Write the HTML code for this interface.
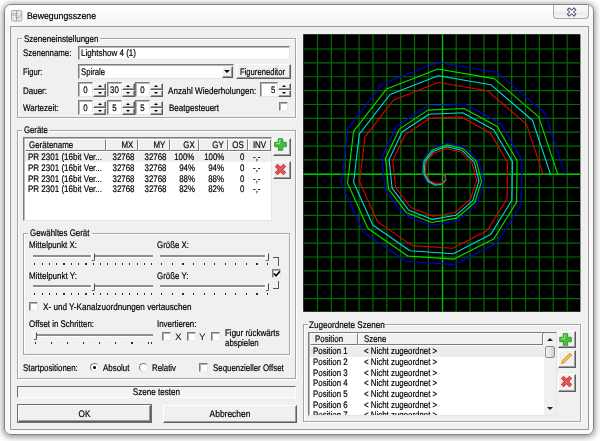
<!DOCTYPE html>
<html><head><meta charset="utf-8"><title>Bewegungsszene</title>
<style>
html,body{margin:0;padding:0;background:#fff;}
body{width:600px;height:441px;position:relative;overflow:hidden;font-family:"Liberation Sans",sans-serif;color:#000;}
div{position:absolute;box-sizing:border-box;}
.t{white-space:nowrap;transform-origin:0 0;color:#000;-webkit-text-stroke:.2px #000;text-rendering:geometricPrecision;}
.win{left:4px;top:4px;width:590px;height:431px;border:1px solid #858585;border-radius:7px;background:linear-gradient(#fdfdfd,#f4f4f4 24px,#fafafa 30px,#fbfbfb);box-shadow:0 1px 6px 1px rgba(0,0,0,.45);}
.client{left:10px;top:26px;width:579px;height:404px;background:#f0f0f0;border:1px solid #9a9a9a;}
.grp{border:1px solid #a6a6a6;box-shadow:1px 1px 0 #fff, inset 1px 1px 0 #fff;}
.lbl{background:#f0f0f0;}
.sunk{background:#fff;border:1px solid;border-color:#7b7b7b #e6e6e6 #e6e6e6 #7b7b7b;box-shadow:inset 1px 1px 0 #b9b9b9;}
.btn{background:#f0f0f0;border:1px solid;border-color:#fff #5e5e5e #5e5e5e #fff;box-shadow:inset -1px -1px 0 #9c9c9c;}
.cb{width:9px;height:9px;background:#fff;border:1px solid;border-color:#7b7b7b #e9e9e9 #e9e9e9 #7b7b7b;box-shadow:inset 1px 1px 0 #b0b0b0;}
.hdr{background:#f0f0f0;border:1px solid;border-color:#fff #7a7a7a #7a7a7a #fff;height:12px;}
.trk{height:3px;background:#8e8e8e;border-bottom:1px solid #fff;}
.thumb{width:4px;height:8.5px;background:#f0f0f0;border-left:1px solid #fff;border-top:1px solid #fff;border-right:1.3px solid #4a4a4a;border-bottom:1px solid #4a4a4a;border-radius:0 0 2px 2px;}
.tick{width:1.2px;height:2px;background:#2a2a2a;}
</style></head><body>

<div id="root" style="left:0;top:0;width:600px;height:441px;will-change:transform">
<div class="win"></div>
<svg style="position:absolute;left:11px;top:10px" width="12" height="12" viewBox="0 0 12 12"><rect x=".6" y=".6" width="10.2" height="10.4" rx="1.3" fill="#eef0f6" stroke="#9a9a9a" stroke-width=".9"/><path d="M1 3.3h9.6M1 5.8h9.6M1 8.3h9.6" stroke="#c9cde0" stroke-width=".6"/><line x1="5.7" y1="1" x2="5.7" y2="10.6" stroke="#8c8c94" stroke-width=".9"/><path d="M1.6 6 C2.6 2.5 3.6 2.5 4.6 5.5 S7.4 9.5 9.8 4.5" fill="none" stroke="#e58a8a" stroke-width="1"/></svg>
<div class="t" style="left:27px;top:10.7px;font-size:9.4px;line-height:9.4px;transform:scaleX(0.9322);">Bewegungsszene</div>
<div style="left:553px;top:5px;width:35.5px;height:14.3px;border:1px solid #a9a9a9;border-top:none;border-radius:0 0 4px 4px;background:linear-gradient(#fbfbfb,#f3f3f3 50%,#eaeaea 51%,#f4f4f4)"></div>
<svg style="position:absolute;left:566px;top:7px" width="12" height="10" viewBox="0 0 12 10"><path d="M1.9 1.5 L9.3 8.5 M9.3 1.5 L1.9 8.5" stroke="#50556f" stroke-width="3.7" stroke-linecap="butt"/><path d="M2.7 2.3 L8.5 7.7 M8.5 2.3 L2.7 7.7" stroke="#fafafd" stroke-width="1.7"/></svg>
<div class="client"></div>
<div class="grp" style="left:17px;top:38px;width:279px;height:80px"></div>
<div class="lbl" style="left:22px;top:33px;width:78px;height:11px"></div>
<div class="t" style="left:23.5px;top:35.2px;font-size:9.5px;line-height:9.5px;transform:scaleX(0.8445);">Szeneneinstellungen</div>
<div class="t" style="left:23.3px;top:49.2px;font-size:9.5px;line-height:9.5px;transform:scaleX(0.8256);">Szenenname:</div>
<div class="sunk" style="left:78px;top:46px;width:212px;height:14px"></div>
<div class="t" style="left:80.5px;top:49.2px;font-size:9.5px;line-height:9.5px;transform:scaleX(0.8468);">Lightshow 4 (1)</div>
<div class="t" style="left:23.3px;top:67.8px;font-size:9.5px;line-height:9.5px;transform:scaleX(0.8026);">Figur:</div>
<div class="sunk" style="left:78px;top:64px;width:156px;height:15px"></div>
<div class="t" style="left:80.5px;top:67.8px;font-size:9.5px;line-height:9.5px;transform:scaleX(0.8114);">Spirale</div>
<div class="btn" style="left:222.3px;top:65.5px;width:11px;height:12px"></div>
<div style="left:224.3px;top:70.3px;width:0;height:0;border-left:3.4px solid transparent;border-right:3.4px solid transparent;border-top:3.4px solid #000"></div>
<div class="btn" style="left:236px;top:63.8px;width:54.8px;height:15.4px"></div>
<div class="t" style="left:240px;top:67.8px;font-size:9.5px;line-height:9.5px;transform:scaleX(0.8038);">Figureneditor</div>
<div class="t" style="left:23.3px;top:86.5px;font-size:9.5px;line-height:9.5px;transform:scaleX(0.8416);">Dauer:</div>
<div class="sunk" style="left:78px;top:82.3px;width:15px;height:14.5px"></div>
<div class="t" style="left:78px;width:15px;top:84.89999999999999px;font-size:9.5px;line-height:9.5px;margin-top:.9px;text-align:center;transform:scaleX(0.83);transform-origin:50% 0">0</div>
<div class="btn" style="left:93.3px;top:82.6px;width:13px;height:7.2px"></div>
<div class="btn" style="left:93.3px;top:89.6px;width:13px;height:7.2px"></div>
<div style="left:97.8px;top:85.1px;width:0;height:0;border-left:2px solid transparent;border-right:2px solid transparent;border-bottom:2px solid #000"></div>
<div style="left:97.8px;top:92.3px;width:0;height:0;border-left:2px solid transparent;border-right:2px solid transparent;border-top:2px solid #000"></div>
<div class="sunk" style="left:106.5px;top:82.3px;width:15px;height:14.5px"></div>
<div class="t" style="left:106.5px;width:15px;top:84.89999999999999px;font-size:9.5px;line-height:9.5px;margin-top:.9px;text-align:center;transform:scaleX(0.83);transform-origin:50% 0">30</div>
<div class="btn" style="left:121.8px;top:82.6px;width:13px;height:7.2px"></div>
<div class="btn" style="left:121.8px;top:89.6px;width:13px;height:7.2px"></div>
<div style="left:126.30000000000001px;top:85.1px;width:0;height:0;border-left:2px solid transparent;border-right:2px solid transparent;border-bottom:2px solid #000"></div>
<div style="left:126.30000000000001px;top:92.3px;width:0;height:0;border-left:2px solid transparent;border-right:2px solid transparent;border-top:2px solid #000"></div>
<div class="sunk" style="left:134.5px;top:82.3px;width:15px;height:14.5px"></div>
<div class="t" style="left:134.5px;width:15px;top:84.89999999999999px;font-size:9.5px;line-height:9.5px;margin-top:.9px;text-align:center;transform:scaleX(0.83);transform-origin:50% 0">0</div>
<div class="btn" style="left:149.8px;top:82.6px;width:13px;height:7.2px"></div>
<div class="btn" style="left:149.8px;top:89.6px;width:13px;height:7.2px"></div>
<div style="left:154.3px;top:85.1px;width:0;height:0;border-left:2px solid transparent;border-right:2px solid transparent;border-bottom:2px solid #000"></div>
<div style="left:154.3px;top:92.3px;width:0;height:0;border-left:2px solid transparent;border-right:2px solid transparent;border-top:2px solid #000"></div>
<div class="t" style="left:23.3px;top:104.0px;font-size:9.5px;line-height:9.5px;transform:scaleX(0.8427);">Wartezeit:</div>
<div class="sunk" style="left:78px;top:100.4px;width:15px;height:14.5px"></div>
<div class="t" style="left:78px;width:15px;top:103.0px;font-size:9.5px;line-height:9.5px;margin-top:.9px;text-align:center;transform:scaleX(0.83);transform-origin:50% 0">0</div>
<div class="btn" style="left:93.3px;top:100.7px;width:13px;height:7.2px"></div>
<div class="btn" style="left:93.3px;top:107.7px;width:13px;height:7.2px"></div>
<div style="left:97.8px;top:103.2px;width:0;height:0;border-left:2px solid transparent;border-right:2px solid transparent;border-bottom:2px solid #000"></div>
<div style="left:97.8px;top:110.4px;width:0;height:0;border-left:2px solid transparent;border-right:2px solid transparent;border-top:2px solid #000"></div>
<div class="sunk" style="left:106.5px;top:100.4px;width:15px;height:14.5px"></div>
<div class="t" style="left:106.5px;width:15px;top:103.0px;font-size:9.5px;line-height:9.5px;margin-top:.9px;text-align:center;transform:scaleX(0.83);transform-origin:50% 0">5</div>
<div class="btn" style="left:121.8px;top:100.7px;width:13px;height:7.2px"></div>
<div class="btn" style="left:121.8px;top:107.7px;width:13px;height:7.2px"></div>
<div style="left:126.30000000000001px;top:103.2px;width:0;height:0;border-left:2px solid transparent;border-right:2px solid transparent;border-bottom:2px solid #000"></div>
<div style="left:126.30000000000001px;top:110.4px;width:0;height:0;border-left:2px solid transparent;border-right:2px solid transparent;border-top:2px solid #000"></div>
<div class="sunk" style="left:134.5px;top:100.4px;width:15px;height:14.5px"></div>
<div class="t" style="left:134.5px;width:15px;top:103.0px;font-size:9.5px;line-height:9.5px;margin-top:.9px;text-align:center;transform:scaleX(0.83);transform-origin:50% 0">5</div>
<div class="btn" style="left:149.8px;top:100.7px;width:13px;height:7.2px"></div>
<div class="btn" style="left:149.8px;top:107.7px;width:13px;height:7.2px"></div>
<div style="left:154.3px;top:103.2px;width:0;height:0;border-left:2px solid transparent;border-right:2px solid transparent;border-bottom:2px solid #000"></div>
<div style="left:154.3px;top:110.4px;width:0;height:0;border-left:2px solid transparent;border-right:2px solid transparent;border-top:2px solid #000"></div>
<div class="t" style="left:168px;top:86.5px;font-size:9.5px;line-height:9.5px;transform:scaleX(0.8525);">Anzahl Wiederholungen:</div>
<div class="sunk" style="left:259.5px;top:82.3px;width:18px;height:14.5px"></div>
<div class="t" style="right:324.5px;top:85.8px;font-size:9.5px;line-height:9.5px;transform:scaleX(0.83);transform-origin:100% 0">5</div>
<div class="btn" style="left:277.8px;top:82.6px;width:13px;height:7.2px"></div>
<div class="btn" style="left:277.8px;top:89.6px;width:13px;height:7.2px"></div>
<div style="left:282.3px;top:85.1px;width:0;height:0;border-left:2px solid transparent;border-right:2px solid transparent;border-bottom:2px solid #000"></div>
<div style="left:282.3px;top:92.3px;width:0;height:0;border-left:2px solid transparent;border-right:2px solid transparent;border-top:2px solid #000"></div>
<div class="t" style="left:168.5px;top:104.0px;font-size:9.5px;line-height:9.5px;transform:scaleX(0.8452);">Beatgesteuert</div>
<div class="cb" style="left:279px;top:102px"></div>
<div class="grp" style="left:17px;top:130px;width:279px;height:249px"></div>
<div class="lbl" style="left:22px;top:125px;width:27px;height:11px"></div>
<div class="t" style="left:23.7px;top:126.0px;font-size:9.5px;line-height:9.5px;transform:scaleX(0.8176);">Geräte</div>
<div class="sunk" style="left:23px;top:137px;width:249px;height:84px"></div>
<div class="hdr" style="left:24.5px;top:138.5px;width:81.0px"></div>
<div class="t" style="left:28.8px;top:141.4px;font-size:9.5px;line-height:9.5px;transform:scaleX(0.8379);">Gerätename</div>
<div class="hdr" style="left:105.5px;top:138.5px;width:32.0px"></div>
<div class="t" style="right:466.5px;top:141.4px;font-size:9.5px;line-height:9.5px;transform:scaleX(0.83);transform-origin:100% 0">MX</div>
<div class="hdr" style="left:137.5px;top:138.5px;width:32.0px"></div>
<div class="t" style="right:434.5px;top:141.4px;font-size:9.5px;line-height:9.5px;transform:scaleX(0.83);transform-origin:100% 0">MY</div>
<div class="hdr" style="left:169.5px;top:138.5px;width:29.0px"></div>
<div class="t" style="right:405.5px;top:141.4px;font-size:9.5px;line-height:9.5px;transform:scaleX(0.83);transform-origin:100% 0">GX</div>
<div class="hdr" style="left:198.5px;top:138.5px;width:29.0px"></div>
<div class="t" style="right:376.5px;top:141.4px;font-size:9.5px;line-height:9.5px;transform:scaleX(0.83);transform-origin:100% 0">GY</div>
<div class="hdr" style="left:227.5px;top:138.5px;width:20.0px"></div>
<div class="t" style="left:227.5px;width:20.0px;top:140.5px;font-size:9.5px;line-height:9.5px;margin-top:.9px;text-align:center;transform:scaleX(0.83);transform-origin:50% 0">OS</div>
<div class="hdr" style="left:247.5px;top:138.5px;width:23.0px"></div>
<div class="t" style="left:247.5px;width:23.0px;top:140.5px;font-size:9.5px;line-height:9.5px;margin-top:.9px;text-align:center;transform:scaleX(0.83);transform-origin:50% 0">INV</div>
<div style="left:24.5px;top:151.5px;width:246px;height:10.5px;background:#efefef"></div>
<div class="t" style="left:27.5px;top:153.2px;font-size:9.5px;line-height:9.5px;transform:scaleX(0.8441);">PR 2301 (16bit Ver...</div>
<div class="t" style="right:466px;top:153.2px;font-size:9.5px;line-height:9.5px;transform:scaleX(0.83);transform-origin:100% 0">32768</div>
<div class="t" style="right:434px;top:153.2px;font-size:9.5px;line-height:9.5px;transform:scaleX(0.83);transform-origin:100% 0">32768</div>
<div class="t" style="right:405.3px;top:153.2px;font-size:9.5px;line-height:9.5px;transform:scaleX(0.83);transform-origin:100% 0">100%</div>
<div class="t" style="right:376px;top:153.2px;font-size:9.5px;line-height:9.5px;transform:scaleX(0.83);transform-origin:100% 0">100%</div>
<div class="t" style="right:356px;top:153.2px;font-size:9.5px;line-height:9.5px;transform:scaleX(0.83);transform-origin:100% 0">0</div>
<div class="t" style="left:253px;top:153.2px;font-size:9.5px;line-height:9.5px;transform:scaleX(0.83);">-,-</div>
<div class="t" style="left:27.5px;top:163.9px;font-size:9.5px;line-height:9.5px;transform:scaleX(0.8441);">PR 2301 (16bit Ver...</div>
<div class="t" style="right:466px;top:163.9px;font-size:9.5px;line-height:9.5px;transform:scaleX(0.83);transform-origin:100% 0">32768</div>
<div class="t" style="right:434px;top:163.9px;font-size:9.5px;line-height:9.5px;transform:scaleX(0.83);transform-origin:100% 0">32768</div>
<div class="t" style="right:405.3px;top:163.9px;font-size:9.5px;line-height:9.5px;transform:scaleX(0.83);transform-origin:100% 0">94%</div>
<div class="t" style="right:376px;top:163.9px;font-size:9.5px;line-height:9.5px;transform:scaleX(0.83);transform-origin:100% 0">94%</div>
<div class="t" style="right:356px;top:163.9px;font-size:9.5px;line-height:9.5px;transform:scaleX(0.83);transform-origin:100% 0">0</div>
<div class="t" style="left:253px;top:163.9px;font-size:9.5px;line-height:9.5px;transform:scaleX(0.83);">-,-</div>
<div class="t" style="left:27.5px;top:174.6px;font-size:9.5px;line-height:9.5px;transform:scaleX(0.8441);">PR 2301 (16bit Ver...</div>
<div class="t" style="right:466px;top:174.6px;font-size:9.5px;line-height:9.5px;transform:scaleX(0.83);transform-origin:100% 0">32768</div>
<div class="t" style="right:434px;top:174.6px;font-size:9.5px;line-height:9.5px;transform:scaleX(0.83);transform-origin:100% 0">32768</div>
<div class="t" style="right:405.3px;top:174.6px;font-size:9.5px;line-height:9.5px;transform:scaleX(0.83);transform-origin:100% 0">88%</div>
<div class="t" style="right:376px;top:174.6px;font-size:9.5px;line-height:9.5px;transform:scaleX(0.83);transform-origin:100% 0">88%</div>
<div class="t" style="right:356px;top:174.6px;font-size:9.5px;line-height:9.5px;transform:scaleX(0.83);transform-origin:100% 0">0</div>
<div class="t" style="left:253px;top:174.6px;font-size:9.5px;line-height:9.5px;transform:scaleX(0.83);">-,-</div>
<div class="t" style="left:27.5px;top:185.3px;font-size:9.5px;line-height:9.5px;transform:scaleX(0.8441);">PR 2301 (16bit Ver...</div>
<div class="t" style="right:466px;top:185.3px;font-size:9.5px;line-height:9.5px;transform:scaleX(0.83);transform-origin:100% 0">32768</div>
<div class="t" style="right:434px;top:185.3px;font-size:9.5px;line-height:9.5px;transform:scaleX(0.83);transform-origin:100% 0">32768</div>
<div class="t" style="right:405.3px;top:185.3px;font-size:9.5px;line-height:9.5px;transform:scaleX(0.83);transform-origin:100% 0">82%</div>
<div class="t" style="right:376px;top:185.3px;font-size:9.5px;line-height:9.5px;transform:scaleX(0.83);transform-origin:100% 0">82%</div>
<div class="t" style="right:356px;top:185.3px;font-size:9.5px;line-height:9.5px;transform:scaleX(0.83);transform-origin:100% 0">0</div>
<div class="t" style="left:253px;top:185.3px;font-size:9.5px;line-height:9.5px;transform:scaleX(0.83);">-,-</div>
<div class="btn" style="left:272.5px;top:137.5px;width:18px;height:18px"></div>
<svg style="position:absolute;left:274.2px;top:138.4px" width="13" height="13" viewBox="0 0 13 13"><path d="M4.3 .7h4.4v3.6h3.6v4.4h-3.6v3.6h-4.4v-3.6h-3.6v-4.4h3.6z" fill="#45bd40" stroke="#2a9427" stroke-width=".9"/><path d="M5.6 2v3.6h-3.6 M5.6 2 h1.6" fill="none" stroke="#8be487" stroke-width="1.1"/></svg>
<div class="btn" style="left:272.5px;top:161px;width:18px;height:18px"></div>
<svg style="position:absolute;left:274.3px;top:162.8px" width="13" height="13" viewBox="0 0 13 13"><path d="M2.2 2.2 L10.8 10.8 M10.8 2.2 L2.2 10.8" stroke="#c53030" stroke-width="3.8" stroke-linecap="butt"/><path d="M2.4 2.4 L10.6 10.6 M10.6 2.4 L2.4 10.6" stroke="#e45555" stroke-width="2.4" stroke-linecap="butt"/></svg>
<div class="grp" style="left:23px;top:232.5px;width:267px;height:122px"></div>
<div class="lbl" style="left:28px;top:227px;width:64px;height:11px"></div>
<div class="t" style="left:30px;top:228.9px;font-size:9.5px;line-height:9.5px;transform:scaleX(0.8345);">Gewähltes Gerät</div>
<div class="t" style="left:29.3px;top:241.4px;font-size:9.5px;line-height:9.5px;transform:scaleX(0.8339);">Mittelpunkt X:</div>
<div class="trk" style="left:32.5px;top:255.0px;width:120.0px"></div>
<div class="thumb" style="left:91.3px;top:252.5px"></div>
<div class="tick" style="left:34.20px;top:262.5px"></div>
<div class="tick" style="left:41.51px;top:262.5px"></div>
<div class="tick" style="left:48.82px;top:262.5px"></div>
<div class="tick" style="left:56.13px;top:262.5px"></div>
<div class="tick" style="left:63.44px;top:262.5px"></div>
<div class="tick" style="left:70.75px;top:262.5px"></div>
<div class="tick" style="left:78.06px;top:262.5px"></div>
<div class="tick" style="left:85.37px;top:262.5px"></div>
<div class="tick" style="left:92.68px;top:262.5px"></div>
<div class="tick" style="left:99.99px;top:262.5px"></div>
<div class="tick" style="left:107.30px;top:262.5px"></div>
<div class="tick" style="left:114.61px;top:262.5px"></div>
<div class="tick" style="left:121.92px;top:262.5px"></div>
<div class="tick" style="left:129.23px;top:262.5px"></div>
<div class="tick" style="left:136.54px;top:262.5px"></div>
<div class="tick" style="left:143.85px;top:262.5px"></div>
<div class="tick" style="left:151.16px;top:262.5px"></div>
<div class="t" style="left:29.3px;top:272.4px;font-size:9.5px;line-height:9.5px;transform:scaleX(0.8442);">Mittelpunkt Y:</div>
<div class="trk" style="left:32.5px;top:285.0px;width:120.0px"></div>
<div class="thumb" style="left:91.3px;top:282.5px"></div>
<div class="tick" style="left:34.20px;top:292.5px"></div>
<div class="tick" style="left:41.51px;top:292.5px"></div>
<div class="tick" style="left:48.82px;top:292.5px"></div>
<div class="tick" style="left:56.13px;top:292.5px"></div>
<div class="tick" style="left:63.44px;top:292.5px"></div>
<div class="tick" style="left:70.75px;top:292.5px"></div>
<div class="tick" style="left:78.06px;top:292.5px"></div>
<div class="tick" style="left:85.37px;top:292.5px"></div>
<div class="tick" style="left:92.68px;top:292.5px"></div>
<div class="tick" style="left:99.99px;top:292.5px"></div>
<div class="tick" style="left:107.30px;top:292.5px"></div>
<div class="tick" style="left:114.61px;top:292.5px"></div>
<div class="tick" style="left:121.92px;top:292.5px"></div>
<div class="tick" style="left:129.23px;top:292.5px"></div>
<div class="tick" style="left:136.54px;top:292.5px"></div>
<div class="tick" style="left:143.85px;top:292.5px"></div>
<div class="tick" style="left:151.16px;top:292.5px"></div>
<div class="t" style="left:157px;top:241.4px;font-size:9.5px;line-height:9.5px;transform:scaleX(0.83);">Größe X:</div>
<div class="trk" style="left:160px;top:255.0px;width:106px"></div>
<div class="thumb" style="left:264.8px;top:252.5px"></div>
<div class="tick" style="left:161.20px;top:262.5px"></div>
<div class="tick" style="left:171.78px;top:262.5px"></div>
<div class="tick" style="left:182.36px;top:262.5px"></div>
<div class="tick" style="left:192.94px;top:262.5px"></div>
<div class="tick" style="left:203.52px;top:262.5px"></div>
<div class="tick" style="left:214.10px;top:262.5px"></div>
<div class="tick" style="left:224.68px;top:262.5px"></div>
<div class="tick" style="left:235.26px;top:262.5px"></div>
<div class="tick" style="left:245.84px;top:262.5px"></div>
<div class="tick" style="left:256.42px;top:262.5px"></div>
<div class="tick" style="left:267.00px;top:262.5px"></div>
<div class="t" style="left:157px;top:272.4px;font-size:9.5px;line-height:9.5px;transform:scaleX(0.83);">Größe Y:</div>
<div class="trk" style="left:160px;top:285.0px;width:106px"></div>
<div class="thumb" style="left:264.8px;top:282.5px"></div>
<div class="tick" style="left:161.20px;top:292.5px"></div>
<div class="tick" style="left:171.78px;top:292.5px"></div>
<div class="tick" style="left:182.36px;top:292.5px"></div>
<div class="tick" style="left:192.94px;top:292.5px"></div>
<div class="tick" style="left:203.52px;top:292.5px"></div>
<div class="tick" style="left:214.10px;top:292.5px"></div>
<div class="tick" style="left:224.68px;top:292.5px"></div>
<div class="tick" style="left:235.26px;top:292.5px"></div>
<div class="tick" style="left:245.84px;top:292.5px"></div>
<div class="tick" style="left:256.42px;top:292.5px"></div>
<div class="tick" style="left:267.00px;top:292.5px"></div>
<div style="left:272.5px;top:257px;width:6.5px;height:9px;border-top:1.5px solid #555;border-right:1.5px solid #555"></div>
<div style="left:272.5px;top:280.5px;width:6.5px;height:8px;border-bottom:1.5px solid #555;border-right:1.5px solid #555"></div>
<div class="cb" style="left:271.5px;top:268.5px"></div>
<svg style="position:absolute;left:272.5px;top:269.5px" width="8" height="8" viewBox="0 0 8 8"><path d="M1 3.5 L3 5.8 L7 1.2" fill="none" stroke="#000" stroke-width="1.6"/></svg>
<div class="cb" style="left:29px;top:302px"></div>
<div class="t" style="left:42.5px;top:302.9px;font-size:9.5px;line-height:9.5px;transform:scaleX(0.8571);">X- und Y-Kanalzuordnungen vertauschen</div>
<div class="t" style="left:29.3px;top:320.0px;font-size:9.5px;line-height:9.5px;transform:scaleX(0.8335);">Offset in Schritten:</div>
<div class="trk" style="left:35px;top:334.0px;width:117.5px"></div>
<div class="thumb" style="left:33.3px;top:331.5px"></div>
<div class="tick" style="left:34.50px;top:341.5px"></div>
<div class="tick" style="left:50.65px;top:341.5px"></div>
<div class="tick" style="left:66.80px;top:341.5px"></div>
<div class="tick" style="left:82.95px;top:341.5px"></div>
<div class="tick" style="left:99.10px;top:341.5px"></div>
<div class="tick" style="left:115.25px;top:341.5px"></div>
<div class="tick" style="left:131.40px;top:341.5px"></div>
<div class="tick" style="left:147.55px;top:341.5px"></div>
<div class="tick" style="left:151.20px;top:341.5px"></div>
<div class="t" style="left:157px;top:320.0px;font-size:9.5px;line-height:9.5px;transform:scaleX(0.83);">Invertieren:</div>
<div class="cb" style="left:162.3px;top:332px"></div>
<div class="t" style="left:174.7px;top:332.3px;font-size:9.4px;line-height:9.4px;transform:scaleX(1.05);-webkit-text-stroke:0">X</div>
<div class="cb" style="left:186.8px;top:332px"></div>
<div class="t" style="left:199.3px;top:332.3px;font-size:9.4px;line-height:9.4px;transform:scaleX(1.05);-webkit-text-stroke:0">Y</div>
<div class="cb" style="left:211px;top:332px"></div>
<div class="t" style="left:225px;top:328.7px;font-size:9.5px;line-height:9.5px;transform:scaleX(0.8393);">Figur rückwärts</div>
<div class="t" style="left:225px;top:338.7px;font-size:9.5px;line-height:9.5px;transform:scaleX(0.83);">abspielen</div>
<div class="t" style="left:23px;top:363.9px;font-size:9.5px;line-height:9.5px;transform:scaleX(0.83);">Startpositionen:</div>
<div style="left:90.0px;top:362.5px;width:9px;height:9px;border-radius:50%;background:#fff;border:1px solid;border-color:#7b7b7b #e2e2e2 #e2e2e2 #7b7b7b;"></div>
<div style="left:93.0px;top:365.5px;width:3px;height:3px;border-radius:50%;background:#000"></div>
<div class="t" style="left:103px;top:363.9px;font-size:9.5px;line-height:9.5px;transform:scaleX(0.8363);">Absolut</div>
<div style="left:138.5px;top:362.5px;width:9px;height:9px;border-radius:50%;background:#fff;border:1px solid;border-color:#7b7b7b #e2e2e2 #e2e2e2 #7b7b7b;"></div>
<div class="t" style="left:152.3px;top:363.9px;font-size:9.5px;line-height:9.5px;transform:scaleX(0.8263);">Relativ</div>
<div class="cb" style="left:199px;top:362.5px"></div>
<div class="t" style="left:213px;top:363.9px;font-size:9.5px;line-height:9.5px;transform:scaleX(0.8287);">Sequenzieller Offset</div>
<div style="left:17px;top:386px;width:279px;height:11.5px;background:#f4f4f4;border:1px solid;border-color:#6f6f6f #fff #fff #6f6f6f"></div>
<div class="t" style="left:17px;width:279px;top:387.4px;font-size:9.5px;line-height:9.5px;margin-top:.9px;text-align:center;transform:scaleX(.852);transform-origin:50% 0">Szene testen</div>
<div style="left:16.7px;top:404.2px;width:135px;height:18.6px;background:#6e6e6e"></div>
<div class="btn" style="left:17.7px;top:405.2px;width:133px;height:16.6px"></div>
<div class="t" style="left:17px;width:135px;top:408.7px;font-size:9.5px;line-height:9.5px;margin-top:.9px;text-align:center;transform:scaleX(.86);transform-origin:50% 0">OK</div>
<div class="btn" style="left:162.5px;top:404.5px;width:134px;height:18px"></div>
<div class="t" style="left:162.5px;width:134px;top:408.7px;font-size:9.5px;line-height:9.5px;margin-top:.9px;text-align:center;transform:scaleX(.887);transform-origin:50% 0">Abbrechen</div>
<svg style="position:absolute;left:303px;top:34px" width="278" height="278" viewBox="303 34 278 278"><rect x="303" y="34" width="278" height="278" fill="#f6f6f6"/><rect x="303.2" y="34.2" width="277.2" height="277.6" fill="#000"/><line x1="317.47" y1="34.2" x2="317.47" y2="311.8" stroke="#007000" stroke-width="1.15"/><line x1="303.2" y1="48.97" x2="580.4" y2="48.97" stroke="#007000" stroke-width="1.15"/><line x1="331.34" y1="34.2" x2="331.34" y2="311.8" stroke="#007000" stroke-width="1.15"/><line x1="303.2" y1="62.84" x2="580.4" y2="62.84" stroke="#007000" stroke-width="1.15"/><line x1="345.21" y1="34.2" x2="345.21" y2="311.8" stroke="#007000" stroke-width="1.15"/><line x1="303.2" y1="76.71" x2="580.4" y2="76.71" stroke="#007000" stroke-width="1.15"/><line x1="359.08" y1="34.2" x2="359.08" y2="311.8" stroke="#007000" stroke-width="1.15"/><line x1="303.2" y1="90.58" x2="580.4" y2="90.58" stroke="#007000" stroke-width="1.15"/><line x1="372.95" y1="34.2" x2="372.95" y2="311.8" stroke="#007000" stroke-width="1.15"/><line x1="303.2" y1="104.45" x2="580.4" y2="104.45" stroke="#007000" stroke-width="1.15"/><line x1="386.82" y1="34.2" x2="386.82" y2="311.8" stroke="#007000" stroke-width="1.15"/><line x1="303.2" y1="118.32" x2="580.4" y2="118.32" stroke="#007000" stroke-width="1.15"/><line x1="400.69" y1="34.2" x2="400.69" y2="311.8" stroke="#007000" stroke-width="1.15"/><line x1="303.2" y1="132.19" x2="580.4" y2="132.19" stroke="#007000" stroke-width="1.15"/><line x1="414.56" y1="34.2" x2="414.56" y2="311.8" stroke="#007000" stroke-width="1.15"/><line x1="303.2" y1="146.06" x2="580.4" y2="146.06" stroke="#007000" stroke-width="1.15"/><line x1="428.43" y1="34.2" x2="428.43" y2="311.8" stroke="#007000" stroke-width="1.15"/><line x1="303.2" y1="159.93" x2="580.4" y2="159.93" stroke="#007000" stroke-width="1.15"/><line x1="442.30" y1="34.2" x2="442.30" y2="311.8" stroke="#007000" stroke-width="1.15"/><line x1="303.2" y1="173.80" x2="580.4" y2="173.80" stroke="#007000" stroke-width="1.15"/><line x1="456.17" y1="34.2" x2="456.17" y2="311.8" stroke="#007000" stroke-width="1.15"/><line x1="303.2" y1="187.67" x2="580.4" y2="187.67" stroke="#007000" stroke-width="1.15"/><line x1="470.04" y1="34.2" x2="470.04" y2="311.8" stroke="#007000" stroke-width="1.15"/><line x1="303.2" y1="201.54" x2="580.4" y2="201.54" stroke="#007000" stroke-width="1.15"/><line x1="483.91" y1="34.2" x2="483.91" y2="311.8" stroke="#007000" stroke-width="1.15"/><line x1="303.2" y1="215.41" x2="580.4" y2="215.41" stroke="#007000" stroke-width="1.15"/><line x1="497.78" y1="34.2" x2="497.78" y2="311.8" stroke="#007000" stroke-width="1.15"/><line x1="303.2" y1="229.28" x2="580.4" y2="229.28" stroke="#007000" stroke-width="1.15"/><line x1="511.65" y1="34.2" x2="511.65" y2="311.8" stroke="#007000" stroke-width="1.15"/><line x1="303.2" y1="243.15" x2="580.4" y2="243.15" stroke="#007000" stroke-width="1.15"/><line x1="525.52" y1="34.2" x2="525.52" y2="311.8" stroke="#007000" stroke-width="1.15"/><line x1="303.2" y1="257.02" x2="580.4" y2="257.02" stroke="#007000" stroke-width="1.15"/><line x1="539.39" y1="34.2" x2="539.39" y2="311.8" stroke="#007000" stroke-width="1.15"/><line x1="303.2" y1="270.89" x2="580.4" y2="270.89" stroke="#007000" stroke-width="1.15"/><line x1="553.26" y1="34.2" x2="553.26" y2="311.8" stroke="#007000" stroke-width="1.15"/><line x1="303.2" y1="284.76" x2="580.4" y2="284.76" stroke="#007000" stroke-width="1.15"/><line x1="567.13" y1="34.2" x2="567.13" y2="311.8" stroke="#007000" stroke-width="1.15"/><line x1="303.2" y1="298.63" x2="580.4" y2="298.63" stroke="#007000" stroke-width="1.15"/><line x1="442.6" y1="34.2" x2="442.6" y2="311.8" stroke="#00c800" stroke-width="1.2"/><line x1="303.2" y1="174.3" x2="580.4" y2="174.3" stroke="#00c800" stroke-width="1.2"/><polyline points="442.6,174.3 445.6,176.1 445.9,180.5 442.1,184.8 434.9,186.0 426.8,181.9 421.7,172.4 422.8,159.9 431.6,148.5 446.8,143.1 464.4,146.9 478.7,160.8 484.0,181.8 476.9,204.3 457.8,220.9 430.9,225.5 403.9,214.8 385.2,190.1 381.8,157.5 396.6,126.2 427.0,106.0 465.3,104.3 500.6,123.6 521.9,159.9 521.3,203.8 497.2,242.8 454.8,264.6 405.4,261.3 363.3,231.9 341.4,183.4 347.9,128.7 382.8,83.7 437.6,62.3 497.4,72.5 544.8,113.2 565.2,174.3" fill="none" stroke="#0000d8" stroke-width="1.1" stroke-linejoin="round"/><polyline points="442.6,174.3 445.4,176.0 445.7,180.1 442.2,184.2 435.3,185.3 427.8,181.4 422.9,172.5 424.0,160.8 432.2,150.1 446.6,144.9 463.1,148.6 476.5,161.6 481.5,181.4 474.8,202.5 456.8,218.1 431.6,222.5 406.2,212.4 388.6,189.2 385.5,158.5 399.4,129.1 427.9,110.1 464.0,108.5 497.2,126.6 517.1,160.8 516.6,202.1 493.9,238.7 454.1,259.1 407.7,256.0 368.0,228.5 347.5,182.9 353.6,131.4 386.4,89.1 437.9,69.0 494.1,78.6 538.7,116.9 557.8,174.3" fill="none" stroke="#00e000" stroke-width="1.1" stroke-linejoin="round"/><polyline points="442.6,174.3 445.2,175.9 445.5,179.7 442.2,183.5 435.8,184.6 428.7,181.0 424.2,172.6 425.1,161.6 432.9,151.6 446.3,146.8 461.8,150.2 474.3,162.4 479.0,180.9 472.8,200.7 455.9,215.3 432.3,219.4 408.5,209.9 392.1,188.2 389.1,159.5 402.1,132.0 428.9,114.2 462.6,112.7 493.7,129.7 512.4,161.6 511.9,200.3 490.6,234.6 453.4,253.7 409.9,250.8 372.8,225.0 353.6,182.3 359.3,134.2 390.0,94.5 438.2,75.8 490.8,84.7 532.6,120.5 550.5,174.3" fill="none" stroke="#00d8d8" stroke-width="1.1" stroke-linejoin="round"/><polyline points="442.6,174.3 445.1,175.8 445.3,179.4 442.2,182.9 436.3,183.9 429.7,180.5 425.4,172.8 426.3,162.5 433.6,153.2 446.1,148.7 460.5,151.8 472.2,163.2 476.5,180.5 470.7,198.9 455.0,212.5 433.0,216.3 410.8,207.5 395.5,187.3 392.8,160.5 404.9,134.9 429.8,118.3 461.2,116.9 490.2,132.7 507.6,162.5 507.1,198.5 487.4,230.4 452.6,248.3 412.1,245.6 377.5,221.6 359.6,181.8 365.0,136.9 393.5,100.0 438.5,82.5 487.5,90.8 526.4,124.2 543.1,174.3" fill="none" stroke="#e00000" stroke-width="1.1" stroke-linejoin="round"/></svg>
<div class="grp" style="left:303px;top:324px;width:277.5px;height:98px"></div>
<div class="lbl" style="left:307.5px;top:319px;width:76px;height:11px"></div>
<div class="t" style="left:309px;top:320.6px;font-size:9.5px;line-height:9.5px;transform:scaleX(0.8537);">Zugeordnete Szenen</div>
<div class="sunk" style="left:308px;top:331.5px;width:249px;height:84px;overflow:hidden"></div>
<div class="hdr" style="left:309.5px;top:333px;width:48px"></div>
<div class="t" style="left:314.5px;top:335.4px;font-size:9.5px;line-height:9.5px;transform:scaleX(0.83);">Position</div>
<div class="hdr" style="left:357.5px;top:333px;width:185.5px"></div>
<div class="t" style="left:363.5px;top:335.4px;font-size:9.5px;line-height:9.5px;transform:scaleX(0.83);">Szene</div>
<div style="left:309.5px;top:346px;width:234px;height:10.5px;background:#ececec"></div>
<div style="left:309.5px;top:345px;width:246.5px;height:69.5px;overflow:hidden" id="zl">
<div class="t" style="left:3.5px;top:2.4px;font-size:9.5px;line-height:9.5px;transform:scaleX(0.83);">Position 1</div>
<div class="t" style="left:54px;top:2.4px;font-size:9.5px;line-height:9.5px;transform:scaleX(0.83);">&lt; Nicht zugeordnet &gt;</div>
<div class="t" style="left:3.5px;top:13.02px;font-size:9.5px;line-height:9.5px;transform:scaleX(0.83);">Position 2</div>
<div class="t" style="left:54px;top:13.02px;font-size:9.5px;line-height:9.5px;transform:scaleX(0.83);">&lt; Nicht zugeordnet &gt;</div>
<div class="t" style="left:3.5px;top:23.64px;font-size:9.5px;line-height:9.5px;transform:scaleX(0.83);">Position 3</div>
<div class="t" style="left:54px;top:23.64px;font-size:9.5px;line-height:9.5px;transform:scaleX(0.83);">&lt; Nicht zugeordnet &gt;</div>
<div class="t" style="left:3.5px;top:34.26px;font-size:9.5px;line-height:9.5px;transform:scaleX(0.83);">Position 4</div>
<div class="t" style="left:54px;top:34.26px;font-size:9.5px;line-height:9.5px;transform:scaleX(0.83);">&lt; Nicht zugeordnet &gt;</div>
<div class="t" style="left:3.5px;top:44.88px;font-size:9.5px;line-height:9.5px;transform:scaleX(0.83);">Position 5</div>
<div class="t" style="left:54px;top:44.88px;font-size:9.5px;line-height:9.5px;transform:scaleX(0.83);">&lt; Nicht zugeordnet &gt;</div>
<div class="t" style="left:3.5px;top:55.5px;font-size:9.5px;line-height:9.5px;transform:scaleX(0.83);">Position 6</div>
<div class="t" style="left:54px;top:55.5px;font-size:9.5px;line-height:9.5px;transform:scaleX(0.83);">&lt; Nicht zugeordnet &gt;</div>
<div class="t" style="left:3.5px;top:66.12px;font-size:9.5px;line-height:9.5px;transform:scaleX(0.83);">Position 7</div>
<div class="t" style="left:54px;top:66.12px;font-size:9.5px;line-height:9.5px;transform:scaleX(0.83);">&lt; Nicht zugeordnet &gt;</div>
</div>
<div style="left:543.5px;top:333px;width:12.5px;height:81.5px;background:#f0f0f0"></div>
<div style="left:547px;top:337.8px;width:0;height:0;border-left:3px solid transparent;border-right:3px solid transparent;border-bottom:3px solid #222"></div>
<div style="left:547px;top:407.3px;width:0;height:0;border-left:3px solid transparent;border-right:3px solid transparent;border-top:3px solid #222"></div>
<div style="left:544.5px;top:346px;width:10.5px;height:11.5px;border:1px solid #8c8c8c;border-radius:2px;background:linear-gradient(90deg,#f6f6f6,#e2e2e2 50%,#cfcfcf)"></div>
<div class="btn" style="left:557.5px;top:331px;width:18px;height:17px"></div>
<svg style="position:absolute;left:559.4px;top:332.8px" width="13" height="13" viewBox="0 0 13 13"><path d="M4.3 .7h4.4v3.6h3.6v4.4h-3.6v3.6h-4.4v-3.6h-3.6v-4.4h3.6z" fill="#45bd40" stroke="#2a9427" stroke-width=".9"/><path d="M5.6 2v3.6h-3.6 M5.6 2 h1.6" fill="none" stroke="#8be487" stroke-width="1.1"/></svg>
<div class="btn" style="left:557.5px;top:350px;width:18px;height:17.5px"></div>
<svg style="position:absolute;left:560px;top:352px" width="13" height="13" viewBox="0 0 13 13"><path d="M1.5 11.5 L2.3 8.6 L9.8 1.2 L11.8 3.2 L4.4 10.7 Z" fill="#f3c04a" stroke="#c8922a" stroke-width=".8"/></svg>
<div class="btn" style="left:557.5px;top:373.5px;width:18px;height:18px"></div>
<svg style="position:absolute;left:559.7px;top:375.3px" width="13" height="13" viewBox="0 0 13 13"><path d="M2.2 2.2 L10.8 10.8 M10.8 2.2 L2.2 10.8" stroke="#c53030" stroke-width="3.8" stroke-linecap="butt"/><path d="M2.4 2.4 L10.6 10.6 M10.6 2.4 L2.4 10.6" stroke="#e45555" stroke-width="2.4" stroke-linecap="butt"/></svg>
</div></body></html>
